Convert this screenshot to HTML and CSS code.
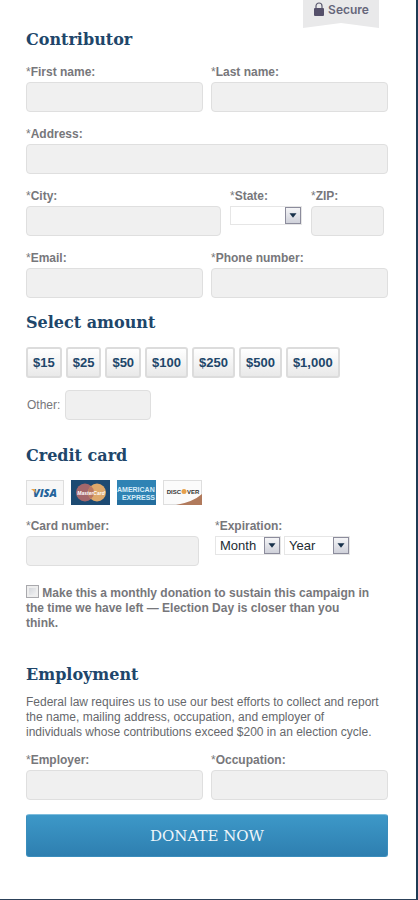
FILE: index.html
```html
<!DOCTYPE html>
<html lang="en">
<head>
    <meta charset="utf-8">
    <meta name="viewport" content="width=device-width, initial-scale=1">
    <title>Donate</title>
    <link rel="stylesheet" href="styles.css">
</head>
<body>
    <form class="donate-form">
        <div class="secure">
            <svg width="10" height="14" viewBox="0 0 10 14">
                <path d="M2 7V4a3 3 0 0 1 6 0v3" fill="none" stroke="#5c5b70" stroke-width="1.2"/>
                <rect x="0" y="6" width="10" height="8" rx="1" fill="#55506a"/>
            </svg>
            Secure
        </div>

        <!-- Contributor -->
        <h2>Contributor</h2>
        <div class="row halves">
            <div class="field">
                <label for="first-name"><span>*</span>First name:</label>
                <input type="text" id="first-name">
            </div>
            <div class="field">
                <label for="last-name"><span>*</span>Last name:</label>
                <input type="text" id="last-name">
            </div>
        </div>
        <div class="row">
            <div class="field">
                <label for="address"><span>*</span>Address:</label>
                <input type="text" id="address">
            </div>
        </div>
        <div class="row city-row">
            <div class="field">
                <label for="city"><span>*</span>City:</label>
                <input type="text" id="city">
            </div>
            <div class="field">
                <label for="state"><span>*</span>State:</label>
                <div class="select">
                    <select id="state"><option></option></select>
                    <svg class="arrow" width="16" height="17" viewBox="0 0 16 17"><path d="M4 6h8l-4 5z" fill="#17304a"/></svg>
                </div>
            </div>
            <div class="field">
                <label for="zip"><span>*</span>ZIP:</label>
                <input type="text" id="zip">
            </div>
        </div>
        <div class="row halves">
            <div class="field">
                <label for="email"><span>*</span>Email:</label>
                <input type="text" id="email">
            </div>
            <div class="field">
                <label for="phone"><span>*</span>Phone number:</label>
                <input type="text" id="phone">
            </div>
        </div>

        <!-- Amount -->
        <h2>Select amount</h2>
        <div class="amounts">
            <button type="button">$15</button>
            <button type="button">$25</button>
            <button type="button">$50</button>
            <button type="button">$100</button>
            <button type="button">$250</button>
            <button type="button">$500</button>
            <button type="button">$1,000</button>
        </div>
        <div class="other">
            <label for="other">Other:</label>
            <input type="text" id="other">
        </div>

        <!-- Credit card -->
        <h2>Credit card</h2>
        <div class="cards">
            <svg width="38" height="25" viewBox="0 0 38 25">
                <rect x=".5" y=".5" width="37" height="24" fill="#f7f7f7" stroke="#dedede"/>
                <text x="19" y="17" text-anchor="middle" class="visa">VISA</text>
                <path d="M5 9h4l1 4z" fill="#e9a44d"/>
            </svg>
            <svg width="39" height="25" viewBox="0 0 39 25">
                <rect width="39" height="25" fill="#1d4a72"/>
                <circle cx="14" cy="12.500" r="9" fill="#a4676b"/>
                <circle cx="26" cy="12.500" r="9" fill="#dda86b"/>
                <path d="M20 5.800a9 9 0 0 1 0 13.400a9 9 0 0 1 0-13.400z" fill="#b97862"/>
                <text x="20" y="15" text-anchor="middle" class="mastercard">MasterCard</text>
            </svg>
            <svg width="39" height="25" viewBox="0 0 39 25">
                <rect width="39" height="25" fill="#2f83b4"/>
                <rect y="20" width="39" height="5" fill="#246e9e"/>
                <text x="0" y="12" class="amex">AMERICAN</text>
                <text x="38" y="20" text-anchor="end" class="amex">EXPRESS</text>
            </svg>
            <svg width="39" height="25" viewBox="0 0 39 25">
                <rect x=".5" y=".5" width="38" height="24" fill="#fbfbfb" stroke="#dedede"/>
                <path d="M13 25Q30 22 39 14V25z" fill="#b17a5c"/>
                <circle cx="21" cy="11.500" r="2.500" fill="#e6a04c"/>
                <text x="18" y="14" text-anchor="end" class="discover">DISC</text>
                <text x="24" y="14" class="discover">VER</text>
            </svg>
        </div>
        <div class="row card-row">
            <div class="field">
                <label for="card-number"><span>*</span>Card number:</label>
                <input type="text" id="card-number">
            </div>
            <div class="field">
                <label for="month"><span>*</span>Expiration:</label>
                <div class="dates">
                    <div class="select">
                        <select id="month"><option>Month</option></select>
                        <svg class="arrow" width="16" height="17" viewBox="0 0 16 17"><path d="M4 6h8l-4 5z" fill="#17304a"/></svg>
                    </div>
                    <div class="select">
                        <select id="year" aria-label="Year"><option>Year</option></select>
                        <svg class="arrow" width="16" height="17" viewBox="0 0 16 17"><path d="M4 6h8l-4 5z" fill="#17304a"/></svg>
                    </div>
                </div>
            </div>
        </div>
        <div class="monthly">
            <input type="checkbox" id="monthly">
            <label for="monthly">Make this a monthly donation to sustain this campaign in the time we have left — Election Day is closer than you think.</label>
        </div>

        <!-- Employment -->
        <h2 class="employment">Employment</h2>
        <p>Federal law requires us to use our best efforts to collect and report the name, mailing address, occupation, and employer of individuals whose contributions exceed $200 in an election cycle.</p>
        <div class="row halves">
            <div class="field">
                <label for="employer"><span>*</span>Employer:</label>
                <input type="text" id="employer">
            </div>
            <div class="field">
                <label for="occupation"><span>*</span>Occupation:</label>
                <input type="text" id="occupation">
            </div>
        </div>
        <button type="submit" class="donate">DONATE NOW</button>
    </form>
</body>
</html>
```
FILE: styles.css
```css
* {
    box-sizing: border-box;
}
body {
    margin: 0;
    background: #fff;
    font-family: "Liberation Sans", Arial, sans-serif;
    font-size: 12px;
    line-height: 15px;
    color: #77777b;
}
.donate-form {
    padding: 0 28px 42px 26px;
    border-right: 2px solid #1f3b54;
    border-bottom: 1px solid #2c4159;
}
.secure {
    display: flex;
    justify-content: center;
    gap: 4px;
    width: 76px;
    height: 28px;
    margin: 0 9px 1px auto;
    padding: 2px 0 0 1px;
    background: #e9e9ea;
    color: #66667a;
    font: 600 12px/15px Inter, sans-serif;
    clip-path: polygon(0 0, 100% 0, 100% 100%, 50% 82%, 0 100%);
}
h2 {
    margin: 0 0 14px;
    padding-top: 1px;
    font: bold 16px/20px "DejaVu Serif", serif;
    color: #20466a;
}
h2.employment {
    margin-bottom: 10px;
}
.row {
    display: grid;
    margin-bottom: 14px;
}
.halves {
    grid-template-columns: 1fr 1fr;
    gap: 8px;
}
.city-row {
    grid-template-columns: 1fr 72px 73px;
    gap: 9px;
    padding-right: 4px;
}
.card-row {
    grid-template-columns: 1fr 173px;
    gap: 16px;
    margin-bottom: 19px;
}
.field label {
    display: block;
    padding-top: 1px;
    margin-bottom: 2px;
    font-weight: bold;
}
.field label span {
    font-weight: normal;
}
input[type="text"] {
    display: block;
    width: 100%;
    height: 30px;
    padding: 0 6px;
    background: #f0f0f0;
    border: 1px solid #dfdfdf;
    border-radius: 4px;
}
.select {
    position: relative;
}
select {
    display: block;
    appearance: none;
    width: 100%;
    height: 19px;
    padding: 0 18px 0 4px;
    background: #fff;
    border: 1px solid #e6e6e6;
    border-radius: 0;
    font: 13px/17px "Liberation Sans", Arial, sans-serif;
    color: #222c33;
}
.arrow {
    position: absolute;
    top: 1px;
    right: 1px;
    background: linear-gradient(#f5f5f7, #cfd1da);
    border: 1px solid #8c8c9c;
    pointer-events: none;
}
.dates {
    display: grid;
    grid-template-columns: 66px 66px;
    gap: 3px;
}
.amounts {
    display: flex;
    flex-wrap: wrap;
    gap: 4px;
    margin-bottom: 12px;
}
.amounts button {
    height: 31px;
    padding: 0 5px;
    background: linear-gradient(#fff, #e9e9e9);
    border: 2px solid #dcdcdc;
    border-radius: 3px;
    font: bold 13px/15px "Liberation Sans", Arial, sans-serif;
    color: #20466a;
}
.other {
    display: flex;
    align-items: center;
    gap: 5px;
    margin-bottom: 25px;
    padding-left: 1px;
}
.other input[type="text"] {
    width: 86px;
}
.cards {
    display: flex;
    gap: 7px;
    margin-bottom: 13px;
}
.visa {
    font: italic 800 11px "Open Sans", sans-serif;
    fill: #24639b;
}
.mastercard {
    font: italic bold 5px "Liberation Sans", sans-serif;
    fill: #fff;
}
.amex {
    font: bold 7px "Liberation Sans", sans-serif;
    fill: #d5ebf8;
}
.discover {
    font: bold 6px "Liberation Sans", sans-serif;
    fill: #333;
}
.monthly {
    margin-bottom: 33px;
    padding-right: 14px;
    font-weight: bold;
}
.monthly input {
    appearance: none;
    width: 13px;
    height: 13px;
    margin: 0;
    vertical-align: -1px;
    background: linear-gradient(135deg, #cdd0d6, #f8f8f8);
    border: 1px solid #a9a9ad;
    box-shadow: inset 0 0 0 2px #eee;
}
p {
    margin: 0 0 12px;
    padding-right: 7px;
    color: #66686c;
}
.donate {
    display: block;
    width: 100%;
    height: 43px;
    background: linear-gradient(#3d98c8, #2e7fb0);
    border: 1px solid #3a8dbc;
    border-top-color: #7dbddd;
    border-radius: 3px;
    font: 15px/20px "DejaVu Serif", serif;
    color: #eef6fb;
}
```
